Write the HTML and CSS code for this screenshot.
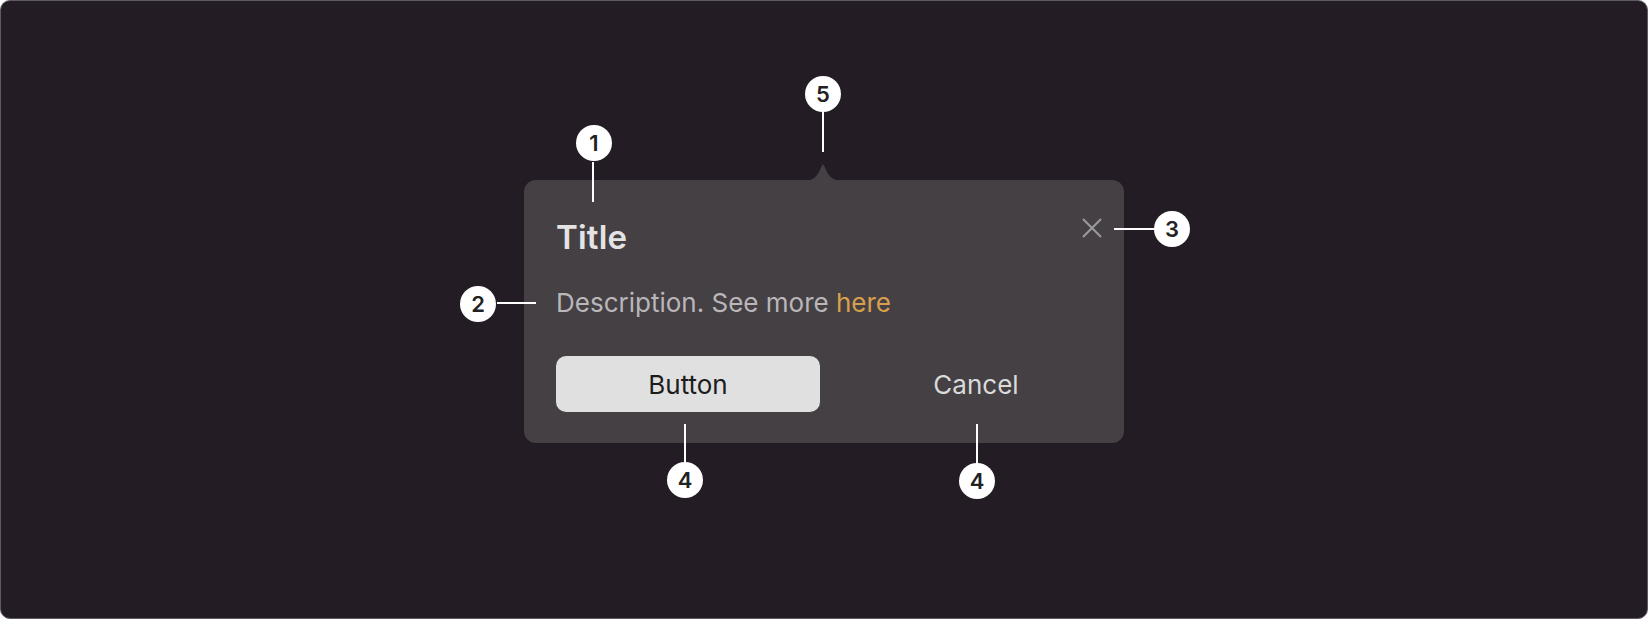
FILE: index.html
```html
<!DOCTYPE html>
<html lang="en">
<head>
<meta charset="utf-8">
<title>Popover anatomy</title>
<link rel="stylesheet" href="styles.css">
</head>
<body>
<div class="frame">
  <div class="popover">
    <svg class="tail" width="40" height="18" viewBox="0 0 40 18"><path d="M0 18 C8 18 13 15 16 9 L19 2.5 Q20 0.5 21 2.5 L24 9 C27 15 32 18 40 18 Z" fill="#444044"/></svg>
    <div class="header">
      <div class="title">Title</div>
      <div class="close">
        <svg width="20" height="20" viewBox="0 0 20 20"><path d="M1 1 L19 19 M19 1 L1 19" stroke="#9d9a9d" stroke-width="2" fill="none"/></svg>
      </div>
    </div>
    <p class="desc">Description. See more <span class="link">here</span></p>
    <div class="actions">
      <div class="btn btn-primary">Button</div>
      <div class="btn btn-ghost">Cancel</div>
    </div>

    <div class="marker m1">1</div><div class="line v l1"></div>
    <div class="marker m5">5</div><div class="line v l5"></div>
    <div class="marker m2">2</div><div class="line h l2"></div>
    <div class="marker m3">3</div><div class="line h l3"></div>
    <div class="marker m4a">4</div><div class="line v l4a"></div>
    <div class="marker m4b">4</div><div class="line v l4b"></div>
  </div>
</div>
</body>
</html>
```
FILE: styles.css
```css
* { box-sizing: border-box; }
html, body { margin: 0; padding: 0; background: #ffffff; }
body { font-family: Inter, "Noto Sans", sans-serif; }

.frame {
  width: 1648px;
  height: 619px;
  border: 1px solid #5e5a62;
  border-radius: 10px;
  background: #241c25;
  display: flex;
  align-items: center;
  justify-content: center;
  padding-top: 4px;
}

.popover {
  position: relative;
  width: 600px;
  padding: 34px 16px 31px 32px;
  background: #444044;
  border-radius: 12px;
}

.tail {
  position: absolute;
  left: 279px;
  top: -17px;
  display: block;
}

.header {
  display: flex;
  justify-content: space-between;
  align-items: flex-start;
  height: 40px;
}
.title {
  margin-top: 3px;
  font-size: 33px;
  line-height: 40px;
  font-weight: 600;
  letter-spacing: 0.2px;
  color: #e4e4e4;
}
.close {
  width: 32px;
  height: 28px;
  display: flex;
  align-items: center;
  justify-content: center;
}
.close svg { display: block; }

.desc {
  margin: 33px 0 0;
  font-size: 26px;
  line-height: 32px;
  color: #bab6ba;
}
.link { color: #d8a04c; }

.actions {
  margin-top: 37px;
  display: flex;
  gap: 24px;
}
.btn {
  flex: 1;
  height: 56px;
  border-radius: 10px;
  display: flex;
  align-items: center;
  justify-content: center;
  font-size: 26px;
}
.btn-primary { background: #e0e0e0; color: #1c1c1c; }
.btn-ghost { color: #dadada; }

.marker {
  position: absolute;
  width: 36px;
  height: 36px;
  border-radius: 50%;
  background: #ffffff;
  color: #222222;
  font-size: 22px;
  font-weight: 600;
  line-height: 36px;
  text-align: center;
}
.line { position: absolute; background: #ffffff; }
.line.v { width: 2px; }
.line.h { height: 2px; }

.m1 { left: 52px; top: -55px; }
.l1 { left: 68px; top: -18px; height: 40px; }

.m5 { left: 281px; top: -104px; }
.l5 { left: 298px; top: -68px; height: 40px; }

.m2 { left: -64px; top: 106px; }
.l2 { left: -27px; top: 122px; width: 39px; }

.m3 { left: 630px; top: 31px; }
.l3 { left: 590px; top: 48px; width: 41px; }

.m4a { left: 143px; top: 282px; }
.l4a { left: 160px; top: 244px; height: 39px; }

.m4b { left: 435px; top: 283px; }
.l4b { left: 452px; top: 244px; height: 40px; }
```
